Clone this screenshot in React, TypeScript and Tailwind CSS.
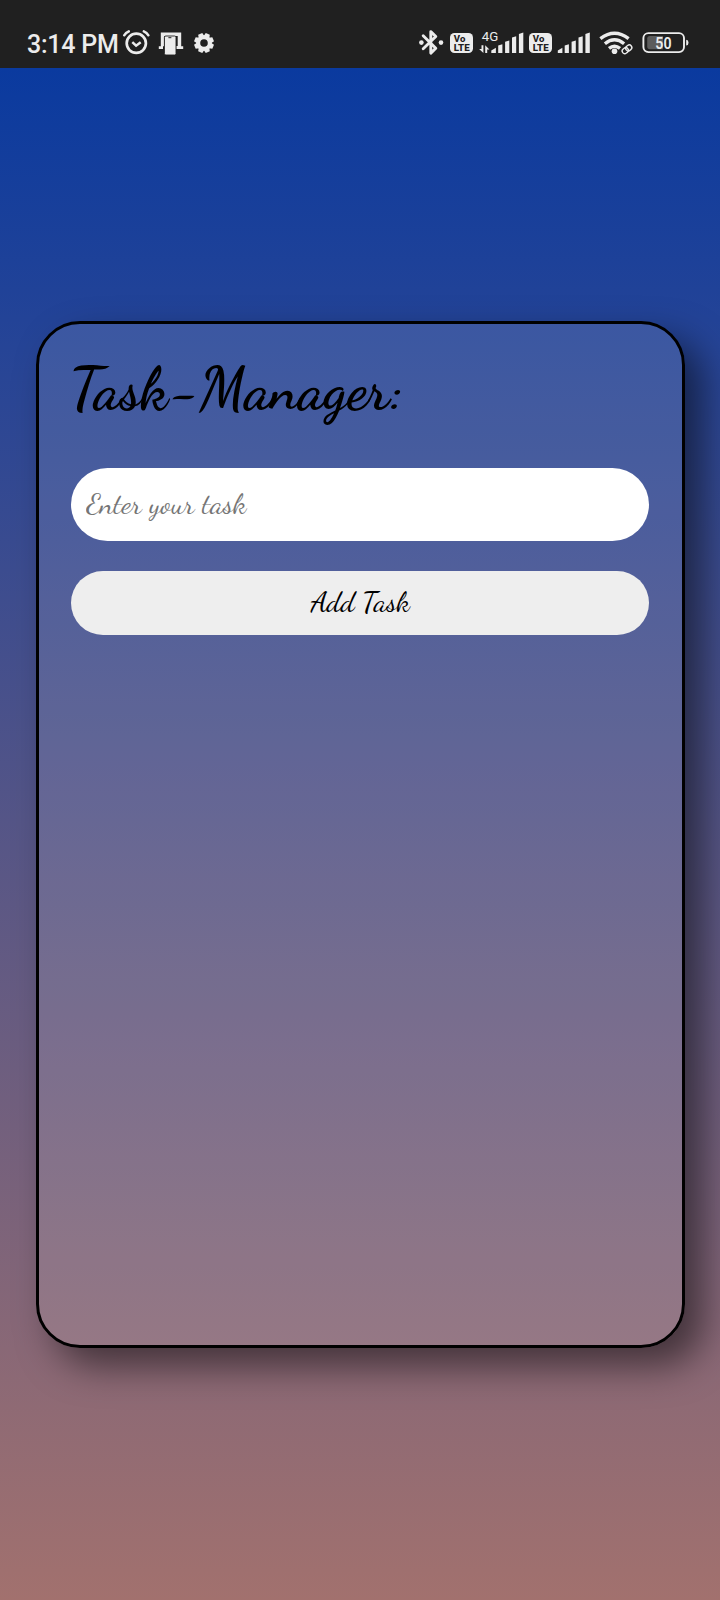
import React from "react";

type IconProps = { x: number; w: number; className?: string; children: React.ReactNode };

/* Every status glyph shares the bar's own coordinate space. */
function BarIcon({ x, w, className = "", children }: IconProps) {
  return (
    <svg width={w} height={68} viewBox={`${x} 0 ${w} 68`} className={`shrink-0 overflow-visible ${className}`} fill="#ececec">
      {children}
    </svg>
  );
}

function VoLte({ x, className }: { x: number; className?: string }) {
  return (
    <BarIcon x={x} w={23} className={className}>
      <rect x={x} y={33} width={23} height={20} rx={4.5} />
      <g fill="#202020" fontFamily="Roboto, sans-serif" fontWeight={800}>
        <text x={x + 3.8} y={42} fontSize={8.6} textLength={11.5} lengthAdjust="spacingAndGlyphs">Vo</text>
        <text x={x + 3.8} y={50.6} fontSize={9.4} textLength={15.8} lengthAdjust="spacingAndGlyphs">LTE</text>
      </g>
    </BarIcon>
  );
}

function Bars({ x }: { x: number }) {
  return (
    <g>
      <path d={`M${x} 53v-2.5l4.6-2.7V53z`} />
      <path d={`M${x + 6.9} 53v-7.4l4.2-1.3V53z`} />
      <path d={`M${x + 13.8} 53V41.8l4.2-1.4V53z`} />
      <path d={`M${x + 20.7} 53V37.6l4.2-1.4V53z`} />
      <path d={`M${x + 27.6} 53V34l4.4-1.6V53z`} />
    </g>
  );
}

function StatusBar() {
  return (
    <header className="flex h-[68px] w-full shrink-0 bg-[#202020] pl-[26px]">
      <span className="w-[97px] shrink-0 whitespace-nowrap pl-px pt-[31px] font-['Roboto',sans-serif] text-[25px] font-medium leading-[28px] tracking-[-0.25px] text-[#ececec]">
        3:14 PM
      </span>

      <BarIcon x={123} w={27}>
        <g fill="none" stroke="#ececec" strokeLinecap="round">
          <circle cx={136.3} cy={43.3} r={9.6} strokeWidth={2.7} />
          <path d="M132.3 42.2l3.8 3.5 4.6-3.5" strokeWidth={2.5} strokeLinecap="butt" />
          <path d="M124.2 35.3q1.6-2.6 4.6-3.9M148.4 35.3q-1.6-2.6-4.6-3.9" strokeWidth={2.5} />
        </g>
      </BarIcon>

      <BarIcon x={158} w={25} className="ml-2">
        <path d="M160.8 32.4h20.4v13.9h2v2.6h-7V46h1.5V36H164v10.2h-1v2.7h-4.2v-2.6h2z" />
        <rect x={164.4} y={36} width={11.6} height={19} rx={1.4} stroke="#202020" strokeWidth={0.9} />
        <path d="M168.4 37.7h3" stroke="#202020" strokeWidth={1} />
      </BarIcon>

      <BarIcon x={194} w={20} className="ml-[11px]">
        <g transform="translate(204 43)">
          <path
            fillRule="evenodd"
            d="M-7.700 0A7.700 7.700 0 1 1 7.700 0A7.700 7.700 0 1 1-7.700 0zM-3.800 0A3.800 3.800 0 1 0 3.800 0A3.800 3.800 0 1 0-3.800 0z"
          />
          {[0, 45, 90, 135, 180, 225, 270, 315].map((angle) => (
            <path key={angle} d="M-3-6.400L-2.200-9.900H2.200L3-6.400z" transform={`rotate(${angle + 22.5})`} />
          ))}
        </g>
      </BarIcon>

      <BarIcon x={419} w={25} className="ml-[205px]">
        <path d="M423.2 35.8l12.6 12.4-5 4.9V31.6l5 4.9-12.6 12.2" fill="none" stroke="#ececec" strokeWidth={2.9} strokeLinejoin="round" strokeLinecap="round" />
        <circle cx={421.4} cy={42.6} r={2.3} />
        <circle cx={441} cy={42.6} r={2.3} />
      </BarIcon>

      <VoLte x={450} className="ml-1.5" />

      <BarIcon x={479} w={44} className="ml-1.5">
        <text x={481.8} y={41} fontSize={13.5} fontFamily="Roboto, sans-serif" textLength={16.5} lengthAdjust="spacingAndGlyphs">4G</text>
        <path d="M481.5 45.3h1.9V53l-4.300-4.100h2.400zM485.2 53V45.3l4.200 4.200h-2.200V53z" />
        <Bars x={491.3} />
      </BarIcon>

      <VoLte x={529} className="ml-1.5" />

      <BarIcon x={558} w={32} className="ml-1.5">
        <Bars x={557.8} />
      </BarIcon>

      <BarIcon x={599} w={33} className="ml-[9px]">
        <g fill="none" stroke="#ececec" strokeWidth={3.4}>
          <path d="M600.4 38.600q14.100-10.800 28.200 0" />
          <path d="M604.9 43.7q9.600-7.800 19.200 0" />
          <path d="M609 48.4q5.500-4.400 11 0" />
        </g>
        <circle cx={614.5} cy={51.2} r={2.8} />
        <g transform="rotate(-38 627 49.3)" fill="none">
          <rect x={621.2} y={46} width={11.6} height={6.8} rx={3.4} stroke="#202020" strokeWidth={3.6} />
          <rect x={621.6} y={46.7} width={6.4} height={5.2} rx={2.6} stroke="#ececec" strokeWidth={1.4} />
          <rect x={626} y={46.7} width={6.4} height={5.2} rx={2.6} stroke="#ececec" strokeWidth={1.4} />
        </g>
      </BarIcon>

      <BarIcon x={642} w={47} className="ml-[10px]">
        <rect x={643.4} y={33.1} width={40.6} height={19} rx={5} fill="none" stroke="#ececec" strokeWidth={1.9} />
        <path d="M650 36h13v13.3h-13q-2.800 0-2.800-2.800v-7.700Q647.200 36 650 36z" fill="#5c5c5c" />
        <path d="M686.200 39.800q2.300.2 2.300 2.900t-2.300 2.900z" />
        <text x={655.3} y={48.6} fontSize={15.8} fontWeight={600} fontFamily="Roboto, sans-serif" textLength={16.2} lengthAdjust="spacingAndGlyphs">50</text>
      </BarIcon>
    </header>
  );
}

export default function App() {
  return (
    <div className="flex h-[1600px] w-[720px] flex-col overflow-hidden bg-[#202020] font-['Dancing_Script','Liberation_Serif',cursive]">
      <StatusBar />
      <main className="flex-1 bg-linear-to-b/srgb from-[#0a3a9f] to-[#a2716e] pl-9 pt-[253px]">
        <section className="flex h-[1027px] w-[649px] flex-col rounded-[44px] border-[3.4px] border-black bg-white/11 px-[32.4px] pt-[30px] shadow-[18px_18px_36px_rgba(0,0,0,0.5)]">
          <h1 className="-ml-[2.5px] h-[114px] whitespace-nowrap text-[58.5px] font-bold leading-[71px] text-black">
            Task-Manager:
          </h1>
          <input
            type="text"
            placeholder="Enter your task"
            className="h-[73px] w-[578px] rounded-full bg-white pb-0.5 pl-[15px] text-[29.3px] text-black outline-none placeholder:text-[#757575] placeholder:opacity-100"
          />
          <button
            type="button"
            className="mt-[30px] h-16 w-[578px] rounded-full bg-[#eeeeee] pb-0.5 text-[29.3px] text-black"
          >
            Add Task
          </button>
        </section>
      </main>
    </div>
  );
}
